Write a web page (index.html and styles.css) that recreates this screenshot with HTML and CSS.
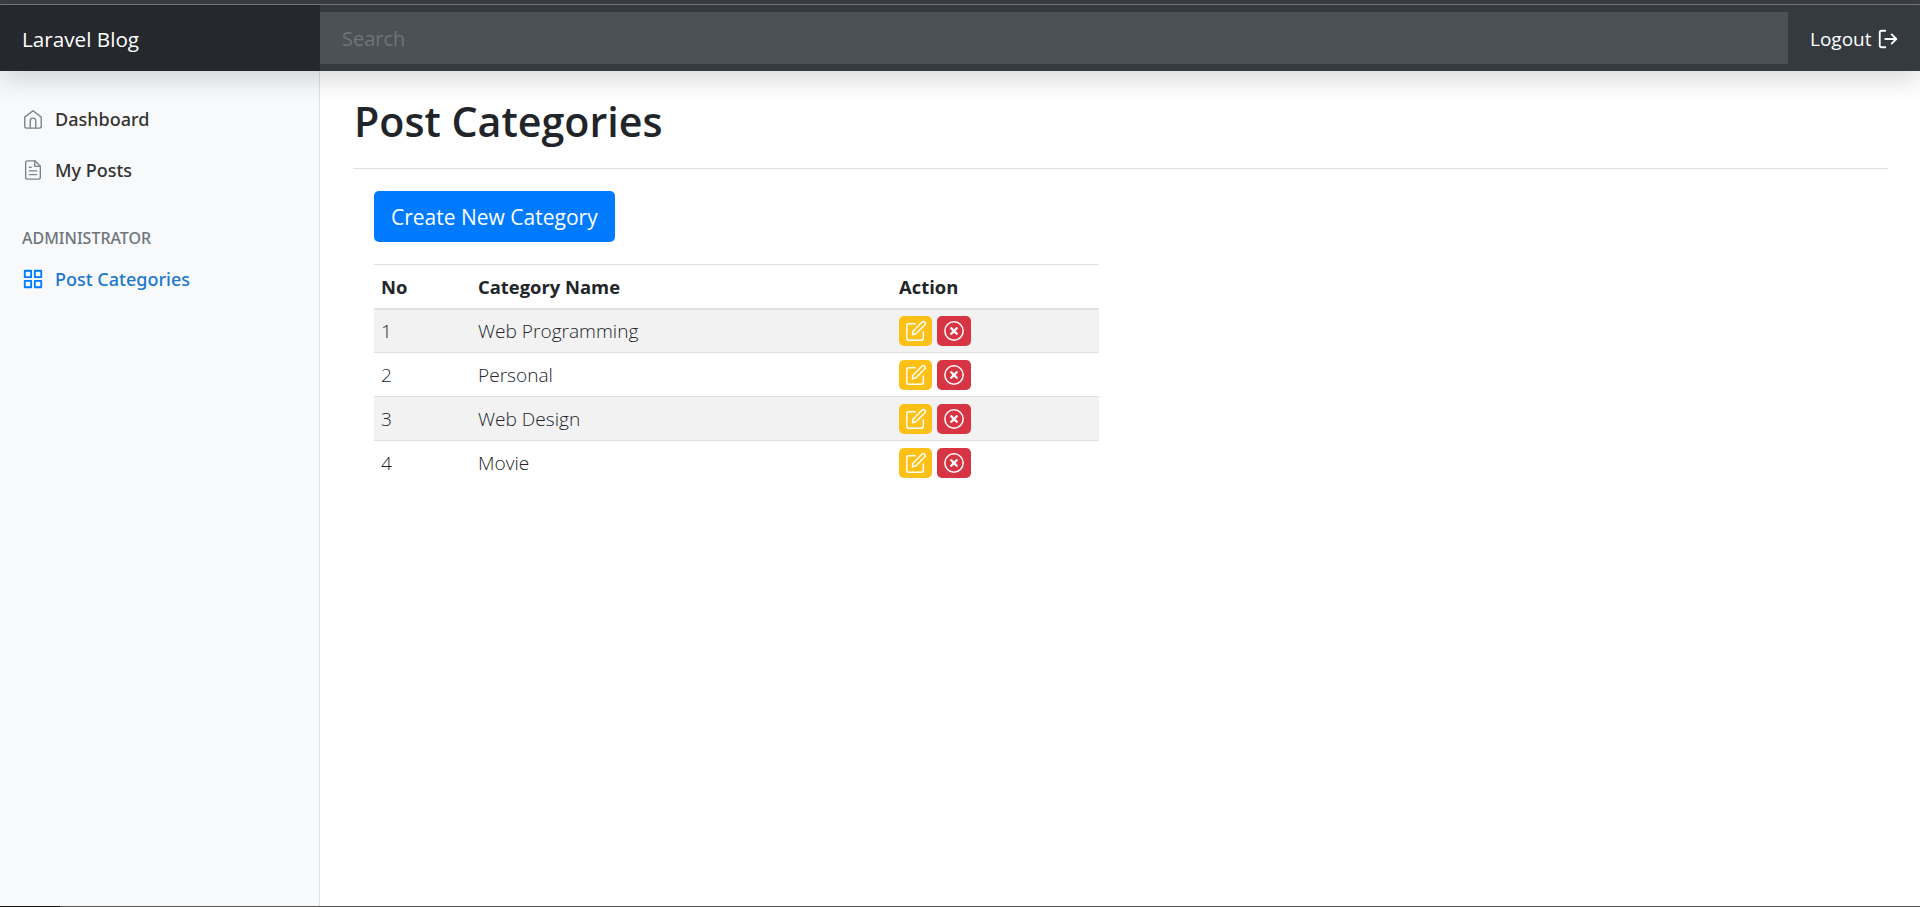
FILE: index.html
```html
<!DOCTYPE html>
<html lang="en">
<head>
  <meta charset="UTF-8">
  <title>Post Categories</title>
  <link rel="stylesheet" href="styles.css">
</head>
<body>
  <header class="navbar">
    <a class="brand" href="#">Laravel Blog</a>
    <div class="search-wrap">
      <input class="search" type="text" placeholder="Search">
    </div>
    <a class="logout" href="#">Logout
      <svg class="icon" viewBox="0 0 24 24"><path d="M9 21H5a2 2 0 0 1-2-2V5a2 2 0 0 1 2-2h4"/><polyline points="16 17 21 12 16 7"/><line x1="21" y1="12" x2="9" y2="12"/></svg>
    </a>
  </header>

  <div class="page">
    <nav class="sidebar">
      <ul class="side-list">
        <li><a class="side-link" href="#">
          <svg class="icon" viewBox="0 0 24 24"><path d="M3 10 12 3l9 7v10a2 2 0 0 1-2 2H5a2 2 0 0 1-2-2z"/><path d="M9 22v-8a3 3 0 0 1 6 0v8"/></svg>
          Dashboard</a></li>
        <li><a class="side-link" href="#">
          <svg class="icon" viewBox="0 0 24 24"><path d="M14 2H6a2 2 0 0 0-2 2v16a2 2 0 0 0 2 2h12a2 2 0 0 0 2-2V8z"/><polyline points="14 2 14 8 20 8"/><line x1="16" y1="13" x2="8" y2="13"/><line x1="16" y1="17" x2="8" y2="17"/><polyline points="10 9 9 9 8 9"/></svg>
          My Posts</a></li>
      </ul>
      <h6 class="side-heading">Administrator</h6>
      <ul class="side-list">
        <li><a class="side-link active" href="#">
          <svg class="icon" viewBox="0 0 24 24"><rect x="3" y="3" width="7" height="7"/><rect x="14" y="3" width="7" height="7"/><rect x="14" y="14" width="7" height="7"/><rect x="3" y="14" width="7" height="7"/></svg>
          Post Categories</a></li>
      </ul>
    </nav>

    <main class="content">
      <div class="title-bar">
        <h1>Post Categories</h1>
      </div>
      <div class="panel">
        <a class="btn-create" href="#">Create New Category</a>
        <table class="table">
          <thead>
            <tr><th class="col-no">No</th><th class="col-name">Category Name</th><th>Action</th></tr>
          </thead>
          <tbody>
            <tr>
              <td>1</td><td>Web Programming</td>
              <td class="actions">
                <a class="badge yellow" href="#"><svg class="icon" viewBox="0 0 24 24"><path d="M11 4H4a2 2 0 0 0-2 2v14a2 2 0 0 0 2 2h14a2 2 0 0 0 2-2v-7"/><path d="M18.5 2.5a2.121 2.121 0 0 1 3 3L12 15l-4 1 1-4 9.5-9.5z"/></svg></a>
                <a class="badge red" href="#"><svg class="icon" viewBox="0 0 24 24"><circle cx="12" cy="12" r="10"/><line x1="15" y1="9" x2="9" y2="15"/><line x1="9" y1="9" x2="15" y2="15"/></svg></a>
              </td>
            </tr>
            <tr>
              <td>2</td><td>Personal</td>
              <td class="actions">
                <a class="badge yellow" href="#"><svg class="icon" viewBox="0 0 24 24"><path d="M11 4H4a2 2 0 0 0-2 2v14a2 2 0 0 0 2 2h14a2 2 0 0 0 2-2v-7"/><path d="M18.5 2.5a2.121 2.121 0 0 1 3 3L12 15l-4 1 1-4 9.5-9.5z"/></svg></a>
                <a class="badge red" href="#"><svg class="icon" viewBox="0 0 24 24"><circle cx="12" cy="12" r="10"/><line x1="15" y1="9" x2="9" y2="15"/><line x1="9" y1="9" x2="15" y2="15"/></svg></a>
              </td>
            </tr>
            <tr>
              <td>3</td><td>Web Design</td>
              <td class="actions">
                <a class="badge yellow" href="#"><svg class="icon" viewBox="0 0 24 24"><path d="M11 4H4a2 2 0 0 0-2 2v14a2 2 0 0 0 2 2h14a2 2 0 0 0 2-2v-7"/><path d="M18.5 2.5a2.121 2.121 0 0 1 3 3L12 15l-4 1 1-4 9.5-9.5z"/></svg></a>
                <a class="badge red" href="#"><svg class="icon" viewBox="0 0 24 24"><circle cx="12" cy="12" r="10"/><line x1="15" y1="9" x2="9" y2="15"/><line x1="9" y1="9" x2="15" y2="15"/></svg></a>
              </td>
            </tr>
            <tr>
              <td>4</td><td>Movie</td>
              <td class="actions">
                <a class="badge yellow" href="#"><svg class="icon" viewBox="0 0 24 24"><path d="M11 4H4a2 2 0 0 0-2 2v14a2 2 0 0 0 2 2h14a2 2 0 0 0 2-2v-7"/><path d="M18.5 2.5a2.121 2.121 0 0 1 3 3L12 15l-4 1 1-4 9.5-9.5z"/></svg></a>
                <a class="badge red" href="#"><svg class="icon" viewBox="0 0 24 24"><circle cx="12" cy="12" r="10"/><line x1="15" y1="9" x2="9" y2="15"/><line x1="9" y1="9" x2="15" y2="15"/></svg></a>
              </td>
            </tr>
          </tbody>
        </table>
      </div>
    </main>
  </div>
  <div class="bottom-strip"><span class="bottom-dark"></span></div>
</body>
</html>
```

FILE: styles.css
```css
* {
  box-sizing: border-box;
}

html, body {
  height: 100%;
}

body {
  margin: 0;
  display: flex;
  flex-direction: column;
  overflow: hidden;
  font-family: "Open Sans", "Noto Sans", sans-serif;
  font-size: 18.4px;
  color: #212529;
  background-color: #3a3d41;
}

a {
  text-decoration: none;
  color: inherit;
}

.icon {
  fill: none;
  stroke: currentColor;
  stroke-width: 2;
  stroke-linecap: round;
  stroke-linejoin: round;
}

/* top bar */
.navbar {
  position: relative;
  z-index: 2;
  flex: none;
  display: flex;
  align-items: center;
  height: 67px;
  margin-top: 4px;
  background-color: #343a40;
  border-top: 1px solid #72767a;
  box-shadow: 0 10px 24px rgba(0, 0, 0, 0.14);
}

.brand {
  flex: none;
  width: 320px;
  height: 100%;
  display: flex;
  align-items: center;
  padding: 1px 0 0 22px;
  font-size: 20.7px;
  color: #fff;
  background-color: #25282d;
}

.search-wrap {
  flex: 1;
}

.search {
  display: block;
  width: 100%;
  height: 52px;
  padding: 0 22px;
  border: 0;
  outline: 0;
  font: inherit;
  font-size: 20px;
  color: #fff;
  background-color: #4b5155;
}

.search::placeholder {
  color: #6c757d;
}

.logout {
  flex: none;
  width: 132px;
  display: flex;
  align-items: center;
  gap: 5px;
  padding: 1px 0 0 22px;
  font-size: 19px;
  color: #fff;
}

.logout .icon {
  width: 22px;
  height: 22px;
}

/* sidebar */
.page {
  flex: 1;
  display: flex;
  min-height: 0;
  background-color: #fff;
}

.sidebar {
  flex: none;
  width: 320px;
  padding-top: 22px;
  background-color: #f8f9fa;
  border-right: 1px solid #dfe1e4;
}

.side-list {
  margin: 0;
  padding: 0;
  list-style: none;
}

.side-link {
  display: flex;
  align-items: center;
  gap: 11px;
  height: 51px;
  padding-left: 22px;
  font-family: "Noto Sans", "Open Sans", sans-serif;
  font-size: 18px;
  font-weight: 500;
  color: #333;
}

.side-link .icon {
  width: 22px;
  height: 22px;
  stroke-width: 1.5;
  color: #7d8285;
}

.side-link.active .icon {
  color: #007bff;
  stroke-width: 2;
}

.side-link.active {
  color: #1a78d0;
}

.side-heading {
  margin: 33px 0 5px;
  padding-left: 22px;
  font-family: "Noto Sans", "Open Sans", sans-serif;
  font-size: 16px;
  font-weight: 500;
  line-height: 20px;
  text-transform: uppercase;
  color: #6c757d;
}

/* main */
.content {
  flex: 1;
  padding: 0 32px 0 33px;
}

.title-bar {
  padding: 23px 0 20px 1px;
  border-bottom: 1px solid #dee2e6;
}

h1 {
  margin: 0;
  font-size: 41.2px;
  font-weight: 600;
  line-height: 54px;
}

.panel {
  padding: 22px 0 0 21px;
}

.btn-create {
  display: inline-block;
  padding: 0 17px;
  height: 51px;
  line-height: 52px;
  font-size: 21px;
  color: #fff;
  background-color: #007bff;
  border-radius: 5px;
}

.table {
  width: 725px;
  margin-top: 22px;
  border-collapse: collapse;
  table-layout: fixed;
}

.table th,
.table td {
  padding: 0 7px;
  height: 44px;
  text-align: left;
  vertical-align: middle;
  border-top: 1px solid #dee2e6;
}

.table th {
  padding-top: 1px;
  font-weight: 700;
  border-bottom: 2px solid #dee2e6;
}

.col-no {
  width: 97px;
}

.col-name {
  width: 421px;
}

.table td {
  padding-top: 1px;
  font-weight: 300;
  font-size: 19.1px;
  color: #212529;
}

.table tbody tr:nth-child(odd) {
  background-color: #f2f2f2;
}

.table td.actions {
  font-size: 0;
}

.badge {
  display: inline-flex;
  align-items: center;
  justify-content: center;
  width: 33px;
  height: 30px;
  margin-right: 5px;
  border-radius: 5px;
  vertical-align: middle;
  color: #fff;
}

.badge .icon {
  width: 22px;
  height: 22px;
  stroke-width: 1.6;
}

.red .icon line {
  stroke-width: 2.6;
}

.yellow {
  background-color: #fcc016;
}

.red {
  background-color: #d73444;
  width: 34px;
}

.bottom-strip {
  flex: none;
  height: 1px;
  background-color: #555;
}

.bottom-dark {
  display: block;
  width: 60px;
  height: 1px;
  background-color: #111;
}
```
